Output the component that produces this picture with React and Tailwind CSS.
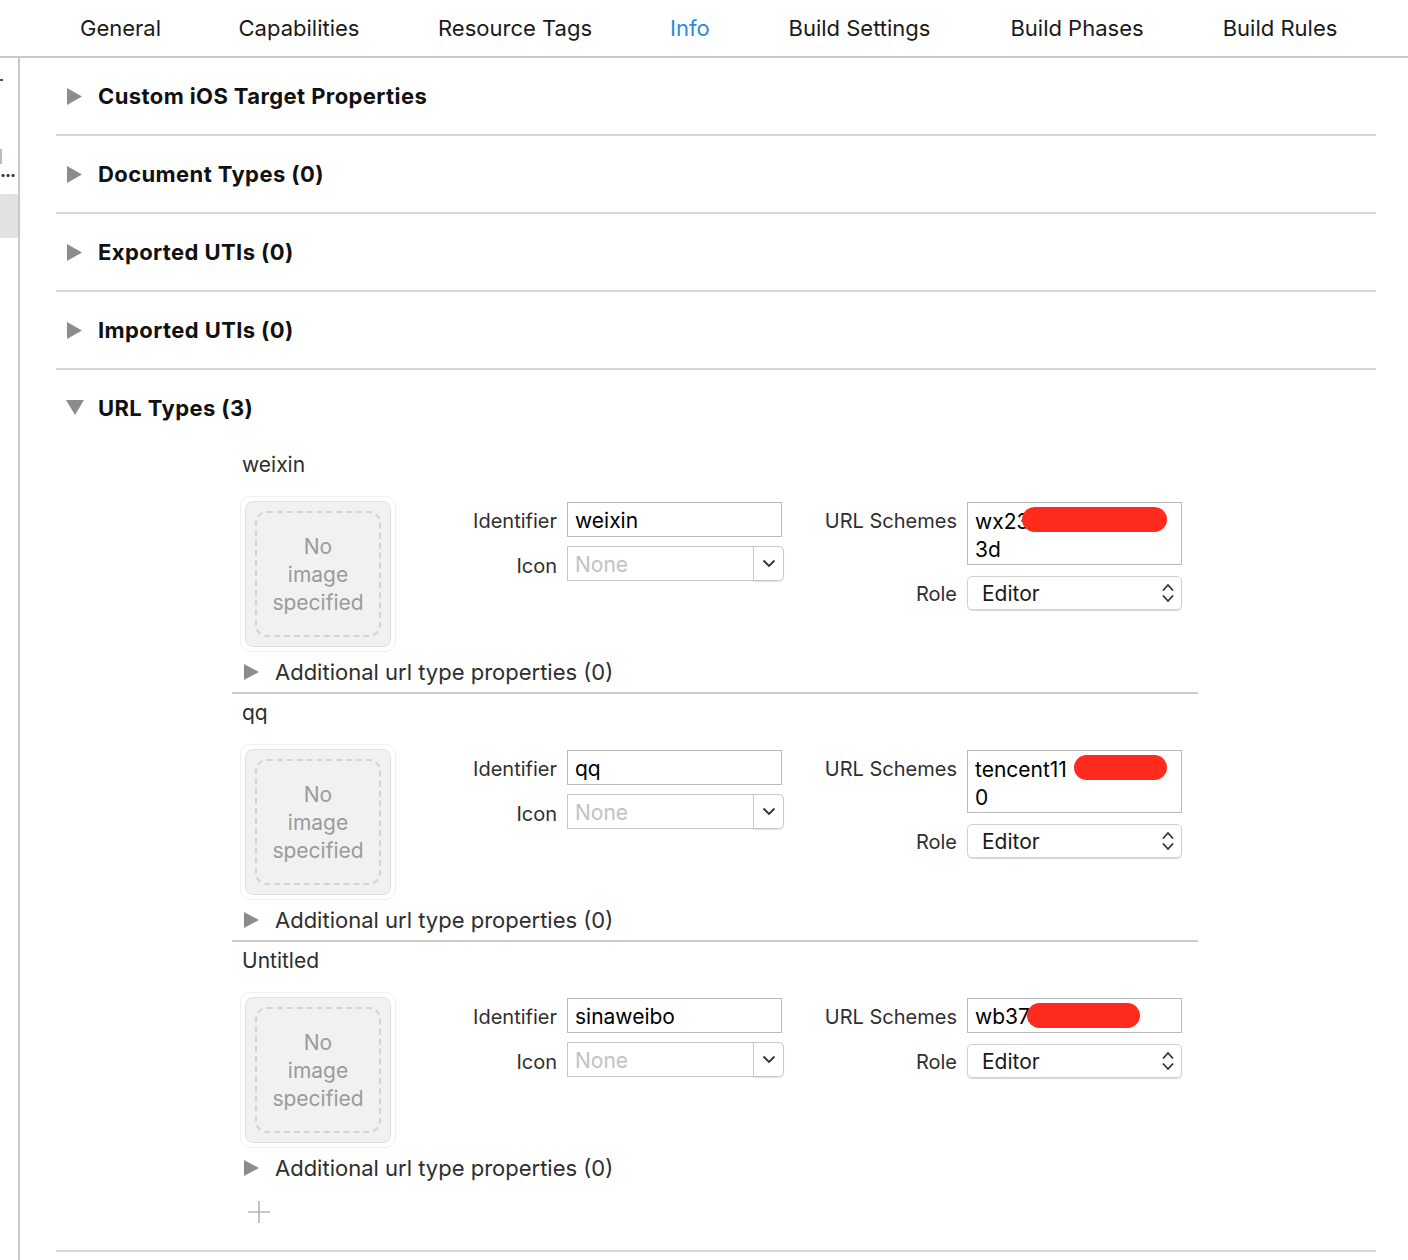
import React from "react";

const tabs = [
  { label: "General", w: "w-[80px]" },
  { label: "Capabilities", w: "w-[122px]" },
  { label: "Resource Tags", w: "w-[154px]" },
  { label: "Info", w: "w-[39px]", active: true },
  { label: "Build Settings", w: "w-[145px]" },
  { label: "Build Phases", w: "w-[134px]" },
  { label: "Build Rules", w: "w-[116px]" },
];

const sections = [
  "Custom iOS Target Properties",
  "Document Types (0)",
  "Exported UTIs (0)",
  "Imported UTIs (0)",
];

// redaction pills sit on top of the scheme text
const urlTypes = [
  {
    name: "weixin",
    identifier: "weixin",
    scheme: "wx23",
    tail: "3d",
    pill: "left-[54px] w-[145px]",
  },
  {
    name: "qq",
    identifier: "qq",
    scheme: "tencent11",
    tail: "0",
    pill: "left-[106px] w-[93px]",
  },
  {
    name: "Untitled",
    identifier: "sinaweibo",
    scheme: "wb37",
    pill: "left-[59px] w-[113px]",
  },
];

function Disclosure({ open }) {
  if (open) {
    return (
      <svg width="18" height="16" viewBox="0 0 18 16" className="shrink-0">
        <path d="M0 0 H18 L9 15 Z" fill="#8c8c8c" />
      </svg>
    );
  }
  return (
    <svg width="15" height="17" viewBox="0 0 15 17" className="shrink-0">
      <path d="M0 0 L15 8.5 L0 17 Z" fill="#8c8c8c" />
    </svg>
  );
}

function ImageWell() {
  return (
    <div className="ml-[8px] w-[156px] h-[156px] shrink-0 rounded-[10px] border border-[#efefef] p-[4px]">
      <div className="h-full rounded-[8px] bg-[#f1f1f1] border border-[#dedede] p-[9px]">
        <div className="h-full pt-[2px] rounded-[12px] border-2 border-dashed border-[#d3d3d3] flex flex-col items-center justify-center text-[21px] leading-[28px] text-[#9b9b9b]">
          <span>No</span>
          <span>image</span>
          <span>specified</span>
        </div>
      </div>
    </div>
  );
}

function IconSelect() {
  return (
    <div className="flex h-[35px] w-[217px]">
      <div className="flex-1 border border-[#c6c6c6] border-r-0 pl-[7px] pt-[3px] flex items-center text-[21px] text-[#c2c2c2]">
        None
      </div>
      <div className="w-[31px] rounded-r-[5px] border border-[#c9c9c9] shadow-[0_1px_1px_rgba(0,0,0,0.12)] flex items-center justify-center">
        <svg width="14" height="9" viewBox="0 0 14 9">
          <path d="M1.5 1.5 L7 7 L12.5 1.5" fill="none" stroke="#333" strokeWidth="1.8" />
        </svg>
      </div>
    </div>
  );
}

function RolePopup() {
  return (
    <div className="h-[34px] w-[215px] rounded-[5px] border border-[#d0d0d0] shadow-[0_1px_1px_rgba(0,0,0,0.15)] flex items-center justify-between pl-[14px] pr-[6px] text-[21px] text-[#1a1a1a]">
      <span className="pt-[2px]">Editor</span>
      <svg width="14" height="22" viewBox="0 0 14 22">
        <path d="M2 8.5 L7 3 L12 8.5" fill="none" stroke="#333" strokeWidth="1.8" />
        <path d="M2 13.5 L7 19 L12 13.5" fill="none" stroke="#333" strokeWidth="1.8" />
      </svg>
    </div>
  );
}

function UrlTypeEntry({ item, last }) {
  return (
    <div className={last ? "pt-[5px]" : "pt-[5px] pb-[6px] border-b-2 border-[#cbcbcb]"}>
      <div className="pl-[10px] text-[21px] leading-[28px] text-[#2e2e2e]">{item.name}</div>

      <div className="mt-[17px] flex items-start">
        <ImageWell />

        {/* identifier + icon */}
        <div className="pt-[6px] grid grid-cols-[161px_auto] gap-x-[10px] gap-y-[9px] items-center text-[20px] text-[#2f2f2f]">
          <span className="text-right pt-[3px]">Identifier</span>
          <div className="h-[35px] w-[215px] border border-[#b9b9b9] pl-[7px] pt-[2px] flex items-center text-[21px] text-black">
            {item.identifier}
          </div>
          <span className="text-right pt-[5px]">Icon</span>
          <IconSelect />
        </div>

        {/* schemes + role */}
        <div className="pt-[6px] grid grid-cols-[173px_auto] gap-x-[10px] gap-y-[11px] items-start text-[20px] text-[#2f2f2f]">
          <span className="text-right leading-[32px] pt-[3px]">URL Schemes</span>
          <div className={`relative w-[215px] border border-[#b9b9b9] pl-[7px] text-[21px] leading-[28px] text-black ${item.tail ? "h-[63px] pt-[5px]" : "h-[35px] pt-[4px]"}`}>
            <div>{item.scheme}</div>
            {item.tail && <div>{item.tail}</div>}
            <span className={`absolute top-[4px] h-[25px] rounded-full bg-[#ff2b1c] ${item.pill}`} />
          </div>
          <span className="text-right leading-[32px] pt-[2px]">Role</span>
          <RolePopup />
        </div>
      </div>

      <div className="mt-[6px] h-[28px] pl-[12px] flex items-center gap-[16px] text-[22px] text-[#2e2e2e]">
        <svg width="15" height="16" viewBox="0 0 15 16" className="shrink-0">
          <path d="M0 0 L15 8 L0 16 Z" fill="#8c8c8c" />
        </svg>
        <span>Additional url type properties (0)</span>
      </div>
    </div>
  );
}

export default function App() {
  return (
    <div className="w-[1408px] h-[1260px] overflow-hidden bg-white font-[Inter,sans-serif]">
      {/* tab bar */}
      <div className="h-[58px] border-b-2 border-[#c9c9c9] flex items-center pl-[80px] gap-[78px] text-[22px] text-[#1a1a1a]">
        {tabs.map((t) => (
          <span
            key={t.label}
            className={`${t.w} text-center whitespace-nowrap ${t.active ? "text-[#2b8ae0]" : ""}`}
          >
            {t.label}
          </span>
        ))}
      </div>

      <div className="flex h-[1202px]">
        {/* collapsed navigator edge */}
        <div className="w-[20px] shrink-0 border-r-2 border-[#c9c9c9] flex flex-col overflow-hidden">
          <div className="mt-[21px] w-[3px] h-[2px] bg-[#555]" />
          <div className="mt-[68px] w-[2px] h-[15px] bg-[#bbb]" />
          <div className="-mt-[2px] text-[18px] leading-[18px] font-bold tracking-[-1px] text-[#333]">...</div>
          <div className="mt-[14px] h-[44px] bg-[#e2e2e2]" />
        </div>

        <div className="flex-1 pl-[36px] pr-[32px]">
          {sections.map((s) => (
            <div key={s} className="h-[78px] border-b-2 border-[#d6d6d6] flex items-center pl-[11px] gap-[16px]">
              <Disclosure />
              <span className="text-[22px] font-bold tracking-[0.4px] text-[#111]">{s}</span>
            </div>
          ))}

          <div className="border-b-2 border-[#d6d6d6] pb-[27px]">
            <div className="h-[76px] flex items-center pl-[10px] gap-[14px]">
              <Disclosure open />
              <span className="text-[22px] font-bold tracking-[0.4px] text-[#111]">URL Types (3)</span>
            </div>

            <div className="ml-[176px] w-[966px]">
              {urlTypes.map((item, i) => (
                <UrlTypeEntry key={item.name} item={item} last={i === urlTypes.length - 1} />
              ))}
              <div className="mt-[19px] ml-[16px]">
                <svg width="22" height="22" viewBox="0 0 22 22">
                  <path d="M11 0 V22 M0 11 H22" stroke="#b5b5b5" strokeWidth="1.6" />
                </svg>
              </div>
            </div>
          </div>
        </div>
      </div>
    </div>
  );
}
